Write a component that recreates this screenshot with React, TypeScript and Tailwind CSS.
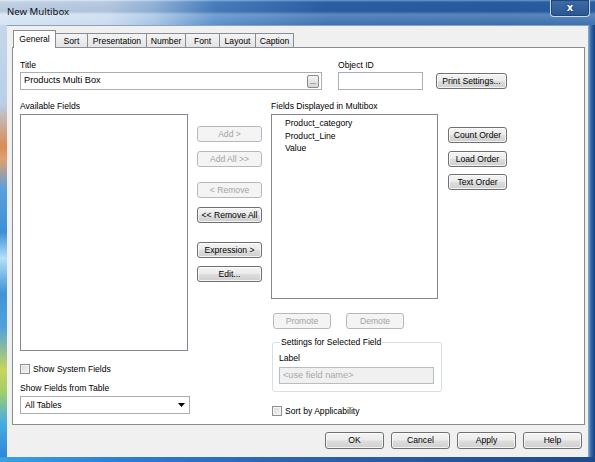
import { ReactNode } from 'react';
import clsx from 'clsx';

const Btn = ({ children, disabled, className }: { children: ReactNode; disabled?: boolean; className?: string }) => (
    <div
        className={clsx(
            'flex items-center justify-center rounded-[3px] border text-[8.6px] leading-none whitespace-nowrap',
            disabled
                ? 'border-[#b5b9bc] bg-[#f4f4f4] text-[#a3a3a3]'
                : 'border-[#707070] bg-[linear-gradient(180deg,#f4f4f4_0%,#ebebeb_48%,#dddddd_52%,#cfcfcf_100%)] text-black shadow-[inset_0_0_0_1px_rgba(255,255,255,0.75)]',
            className
        )}
    >
        {children}
    </div>
);

const Check = ({ label }: { label: string }) => (
    <div className="flex h-[10px] items-center gap-[3px]">
        <div className="h-[10px] w-[10px] border border-[#8f8f8f] bg-[linear-gradient(135deg,#d8d8d8,#f7f7f7)] shadow-[inset_0_0_0_1px_#f4f4f4]" />
        <span className="text-[8.6px] leading-[10px]">{label}</span>
    </div>
);

const Label = ({ children }: { children: ReactNode }) => (
    <div className="h-[10px] text-[8.6px] leading-[10px] whitespace-nowrap">{children}</div>
);

const tabs = [
    { name: 'General', w: 'w-[43px]' },
    { name: 'Sort', w: 'w-[33px]' },
    { name: 'Presentation', w: 'w-[60px]' },
    { name: 'Number', w: 'w-[40px]' },
    { name: 'Font', w: 'w-[35px]' },
    { name: 'Layout', w: 'w-[37px]' },
    { name: 'Caption', w: 'w-[39px]' },
];

const fields = ['Product_category', 'Product_Line', 'Value'];

export default function App() {
    return (
        <div className="flex h-[462px] w-[595px] flex-col overflow-hidden bg-[#2b5fa3] font-['Liberation_Sans',Arial,sans-serif] text-black">
            {/* title bar */}
            <div className="flex h-[25px] shrink-0 items-start justify-between bg-[image:linear-gradient(180deg,rgba(255,255,255,0.35)_0%,rgba(0,20,70,0.08)_8%,rgba(0,20,70,0.12)_45%,rgba(255,255,255,0.22)_58%,rgba(255,255,255,0.08)_100%),linear-gradient(90deg,#d3e2f2_0%,#c6d9ee_18%,#9dbfe3_26%,#4e87c6_36%,#2d66ac_55%,#2a62a7_85%,#2e66aa_100%)] pl-[7px] pr-[5px]">
                <span className="mt-[6px] font-['Noto_Sans',sans-serif] text-[9.6px] leading-[12px] text-[#111]">New Multibox</span>
                <div className="flex h-[17px] w-[40px] items-center justify-center rounded-b-[4px] border border-t-0 border-[#c9d8ea] bg-[linear-gradient(180deg,#3e6ca7,#2a5690)] shadow-[inset_0_0_0_1px_#1f467c]">
                    <span className="font-['DejaVu_Sans',sans-serif] text-[10px] font-bold leading-none text-white [text-shadow:0_0_2px_#0c2448]">x</span>
                </div>
            </div>

            <div className="flex flex-1">
                {/* left frame */}
                <div className="w-[7px] bg-[linear-gradient(180deg,#c4d7ec_0%,#b9cfe8_18%,#d98c55_28%,#e0a070_31%,#5aa0dc_38%,#3d90d6_48%,#b5e0f7_54%,#3f93d8_62%,#4ea2dc_70%,#c9d55a_80%,#9fcf6a_85%,#46aee3_92%,#2f86d6_100%)]" />

                {/* client */}
                <div className="flex flex-1 flex-col border-t border-[#8da2bd] bg-[#f0f0f0] pl-[5px] pr-[3px] pt-[4px]">
                    <div className="flex h-[17px] items-end pl-[1px]">
                        {tabs.map((t, i) =>
                            i === 0 ? (
                                <div
                                    key={t.name}
                                    className={clsx(
                                        'relative z-10 -mb-px flex h-[18px] items-start justify-center border border-b-0 border-[#898c95] bg-white pt-[3px] text-[8.6px] leading-[10px]',
                                        t.w
                                    )}
                                >
                                    {t.name}
                                </div>
                            ) : (
                                <div
                                    key={t.name}
                                    className={clsx(
                                        '-ml-px flex h-[14px] items-center justify-center border border-b-0 border-[#898c95] bg-[linear-gradient(180deg,#f4f4f4,#e4e4e4)] text-[8.6px] leading-[10px]',
                                        t.w
                                    )}
                                >
                                    {t.name}
                                </div>
                            )
                        )}
                    </div>

                    {/* panel */}
                    <div className="h-[378px] border border-[#898c95] bg-white pl-[7px] pt-[12px]">
                        <div className="flex">
                            <div className="w-[302px]">
                                <Label>Title</Label>
                                <div className="mt-[2px] flex h-[18px] items-center justify-between border border-[#abadb3] pl-[3px] pr-[2px]">
                                    <span className="text-[9.2px] leading-none">Products Multi Box</span>
                                    <div className="flex h-[13px] w-[12px] items-end justify-center rounded-[2px] border border-[#8a8a8a] bg-[linear-gradient(180deg,#f4f4f4,#d6d6d6)] pb-[2px] text-[7px] leading-none">
                                        ...
                                    </div>
                                </div>
                            </div>
                            <div className="ml-[16px] w-[85px]">
                                <Label>Object ID</Label>
                                <div className="mt-[2px] h-[18px] border border-[#abadb3]" />
                            </div>
                            <Btn className="ml-[13px] mt-[13px] h-[16px] w-[71px]">Print Settings...</Btn>
                        </div>

                        <div className="mt-[11px] flex">
                            {/* available fields */}
                            <div className="w-[170px]">
                                <Label>Available Fields</Label>
                                <div className="mt-[3px] h-[237px] w-[168px] border border-[#828790]" />
                                <div className="mt-[13px]">
                                    <Check label="Show System Fields" />
                                </div>
                                <div className="mt-[9px]">
                                    <Label>Show Fields from Table</Label>
                                </div>
                                <div className="mt-[3px] flex h-[18px] items-center justify-between border border-[#abadb3] pl-[4px] pr-[4px]">
                                    <span className="text-[8.6px] leading-none">All Tables</span>
                                    <svg width="7" height="4" viewBox="0 0 7 4">
                                        <path d="M0 0h7L3.5 4z" fill="#000" />
                                    </svg>
                                </div>
                            </div>

                            {/* add / remove */}
                            <div className="ml-[7px] flex w-[65px] flex-col pt-[25px]">
                                <Btn disabled className="h-[16px]">Add &gt;</Btn>
                                <Btn disabled className="mt-[9px] h-[16px]">Add All &gt;&gt;</Btn>
                                <Btn disabled className="mt-[15px] h-[16px]">&lt; Remove</Btn>
                                <Btn className="mt-[9px] h-[16px]">&lt;&lt; Remove All</Btn>
                                <Btn className="mt-[19px] h-[16px]">Expression &gt;</Btn>
                                <Btn className="mt-[8px] h-[16px]">Edit...</Btn>
                            </div>

                            {/* displayed fields */}
                            <div className="ml-[9px] w-[171px]">
                                <Label>Fields Displayed in Multibox</Label>
                                <div className="mt-[3px] h-[185px] w-[167px] border border-[#828790] pl-[13px] pt-[2px]">
                                    {fields.map((f) => (
                                        <div key={f} className="text-[8.6px] leading-[12.5px]">
                                            {f}
                                        </div>
                                    ))}
                                </div>
                                <div className="mt-[14px] flex pl-[2px]">
                                    <Btn disabled className="h-[16px] w-[58px]">Promote</Btn>
                                    <Btn disabled className="ml-[15px] h-[16px] w-[58px]">Demote</Btn>
                                </div>
                                <fieldset className="ml-[1px] mt-[8px] w-[170px] rounded-[3px] border border-[#d5dfe5] px-[6px] pb-[7px]">
                                    <legend className="ml-[1px] px-[1px] text-[8.6px] leading-[10px]">Settings for Selected Field</legend>
                                    <div className="mt-[6px]">
                                        <Label>Label</Label>
                                    </div>
                                    <div className="mt-[4px] flex h-[17px] w-[155px] items-center border border-[#b9bcc0] bg-[#f0f0f0] pl-[3px]">
                                        <span className="text-[9.2px] leading-none text-[#a9a9a9]">&lt;use field name&gt;</span>
                                    </div>
                                </fieldset>
                                <div className="ml-[1px] mt-[14px]">
                                    <Check label="Sort by Applicability" />
                                </div>
                            </div>

                            {/* sort order */}
                            <div className="ml-[6px] flex w-[59px] flex-col pt-[26px]">
                                <Btn className="h-[16px]">Count Order</Btn>
                                <Btn className="mt-[8px] h-[16px]">Load Order</Btn>
                                <Btn className="mt-[7px] h-[16px]">Text Order</Btn>
                            </div>
                        </div>
                    </div>

                    {/* dialog buttons */}
                    <div className="mr-[3px] mt-[7px] flex justify-end gap-[7px]">
                        {['OK', 'Cancel', 'Apply', 'Help'].map((b) => (
                            <Btn key={b} className="h-[17px] w-[59px]">
                                {b}
                            </Btn>
                        ))}
                    </div>
                </div>

                {/* right frame */}
                <div className="w-[7px] bg-[linear-gradient(90deg,#8fb0d8,#3a6cae_40%,#22549a_70%,#163f7a)]" />
            </div>

            {/* bottom frame */}
            <div className="h-[5px] shrink-0 bg-[linear-gradient(90deg,#38a3e2,#2c7fd0_20%,#2a63ad_50%,#1d4a8c_100%)]" />
        </div>
    );
}
